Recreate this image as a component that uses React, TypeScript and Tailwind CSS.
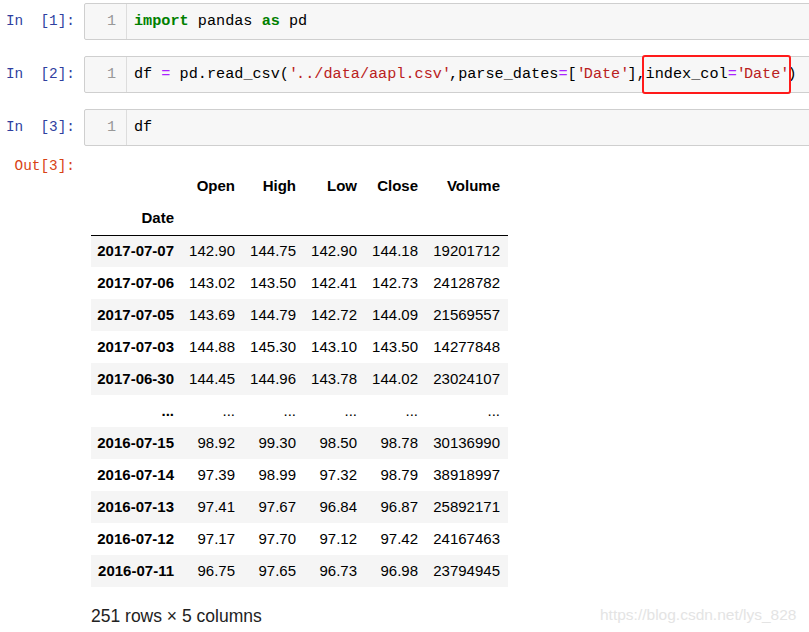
import type { ReactNode } from 'react';

const mono = { fontFamily: '"Liberation Mono", "DejaVu Sans Mono", monospace' };

const rows: [string, string, string, string, string, string][] = [
  ['2017-07-07', '142.90', '144.75', '142.90', '144.18', '19201712'],
  ['2017-07-06', '143.02', '143.50', '142.41', '142.73', '24128782'],
  ['2017-07-05', '143.69', '144.79', '142.72', '144.09', '21569557'],
  ['2017-07-03', '144.88', '145.30', '143.10', '143.50', '14277848'],
  ['2017-06-30', '144.45', '144.96', '143.78', '144.02', '23024107'],
  ['...', '...', '...', '...', '...', '...'],
  ['2016-07-15', '98.92', '99.30', '98.50', '98.78', '30136990'],
  ['2016-07-14', '97.39', '98.99', '97.32', '98.79', '38918997'],
  ['2016-07-13', '97.41', '97.67', '96.84', '96.87', '25892171'],
  ['2016-07-12', '97.17', '97.70', '97.12', '97.42', '24167463'],
  ['2016-07-11', '96.75', '97.65', '96.73', '96.98', '23794945'],
];

const colWidths = ['w-[91px]', 'w-[61px]', 'w-[61px]', 'w-[61px]', 'w-[61px]', 'w-[82px]'];

function Q() {
  return <span className="tracking-[-2px]">'</span>;
}

function Str({ children }: { children: ReactNode }) {
  return (
    <span className="text-[#ba2121]">
      <Q />
      {children}
      <Q />
    </span>
  );
}

function Prompt({ label, n, out }: { label: string; n: number; out?: boolean }) {
  return (
    <div
      className={`w-[84px] shrink-0 flex items-center justify-end pr-[9px] whitespace-pre text-[14.4px] ${
        out ? 'text-[#d84315]' : 'text-[#303f9f]'
      }`}
      style={mono}
    >
      {label}
      {out ? '' : '  '}[{n}]:
    </div>
  );
}

function Cell({ n, children }: { n: number; children: ReactNode }) {
  return (
    <div className="flex h-[37px]">
      <Prompt label="In" n={n} />
      <div className="flex-1 -mr-[20px] flex border border-[#cfcfcf] rounded-[2px] bg-[#f7f7f7]">
        <div
          className="w-[42px] shrink-0 border-r border-[#dddddd] flex items-center justify-end pr-[10px] text-[15.2px] text-[#999999]"
          style={mono}
        >
          1
        </div>
        <div className="flex items-center pl-[7px] whitespace-pre text-[15.2px] text-black" style={mono}>
          {children}
        </div>
      </div>
    </div>
  );
}

export default function App() {
  return (
    <div className="relative w-[809px] h-[632px] overflow-hidden bg-white">
      <div className="pt-[3px] flex flex-col gap-[16px]">
        <Cell n={1}>
          <span className="font-bold text-[#008000]">import</span> pandas{' '}
          <span className="font-bold text-[#008000]">as</span> pd
        </Cell>
        <Cell n={2}>
          df <span className="text-[#aa22ff]">=</span> pd.read_csv(<Str>../data/aapl.csv</Str>,parse_dates
          <span className="text-[#aa22ff]">=</span>[<Str>Date</Str>],
          <span className="relative">
            index_col<span className="text-[#aa22ff]">=</span>
            <Str>Date</Str>
            <span className="absolute left-[-4px] right-[-4px] top-[-8px] bottom-[-8px] border-[2.5px] border-[#ff1a1a] rounded-[3px]" />
          </span>
          )
        </Cell>
        <Cell n={3}>df</Cell>
      </div>

      <div className="flex mt-[10px]">
        <div className="self-start">
          <Prompt label="Out" n={3} out />
        </div>
        <div className="pl-[7px] pt-[14px]" style={{ fontFamily: '"Liberation Sans", Arial, sans-serif' }}>
          <table className="border-collapse text-[15px] text-black">
            <thead>
              <tr className="h-[32px]">
                <th className={`${colWidths[0]} p-0`} />
                {['Open', 'High', 'Low', 'Close', 'Volume'].map((h, i) => (
                  <th key={h} className={`${colWidths[i + 1]} p-0 pr-[8px] text-right font-bold`}>
                    {h}
                  </th>
                ))}
              </tr>
              <tr className="h-[33px] border-b border-black">
                <th className="p-0 pr-[8px] text-right font-bold">Date</th>
                <th className="p-0" />
                <th className="p-0" />
                <th className="p-0" />
                <th className="p-0" />
                <th className="p-0" />
              </tr>
            </thead>
            <tbody>
              {rows.map((r, i) => (
                <tr key={i} className={`h-[32px] ${i % 2 === 0 ? 'bg-[#f5f5f5]' : 'bg-white'}`}>
                  <th className="p-0 pr-[8px] text-right font-bold">{r[0]}</th>
                  {r.slice(1).map((v, j) => (
                    <td key={j} className="p-0 pr-[8px] text-right">
                      {v}
                    </td>
                  ))}
                </tr>
              ))}
            </tbody>
          </table>
          <p className="mt-[16px] text-[17.5px] text-[#222222]">251 rows × 5 columns</p>
        </div>
      </div>

      <div
        className="absolute left-[600px] top-[603px] text-[15.5px] text-[#e4e4e4]"
        style={{ fontFamily: '"Liberation Sans", Arial, sans-serif' }}
      >
        https://blog.csdn.net/lys_828
      </div>
    </div>
  );
}
